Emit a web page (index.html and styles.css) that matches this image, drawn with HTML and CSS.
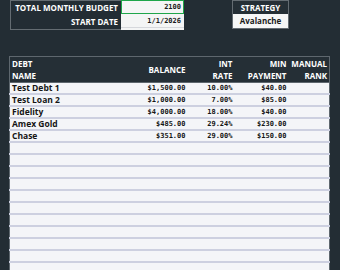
FILE: index.html
```html
<!DOCTYPE html>
<html>
<head>
<meta charset="utf-8">
<link rel="stylesheet" href="styles.css">
</head>
<body>
<div class="top">
  <div class="budget">
    <div class="labels">
      <div class="lbl">TOTAL MONTHLY BUDGET</div>
      <div class="lbl">START DATE</div>
    </div>
    <div class="vals">
      <div class="val sel">2100</div>
      <div class="val">1/1/2026</div>
    </div>
  </div>
  <div class="strategy">
    <div class="shead">STRATEGY</div>
    <div class="sval">Avalanche</div>
  </div>
</div>
<table class="debts">
  <colgroup>
    <col class="c-name"><col class="c-bal"><col class="c-rate"><col class="c-pay"><col class="c-rank">
  </colgroup>
  <thead>
    <tr>
      <th class="left">DEBT<br>NAME</th>
      <th>BALANCE</th>
      <th>INT<br>RATE</th>
      <th>MIN<br>PAYMENT</th>
      <th>MANUAL<br>RANK</th>
    </tr>
  </thead>
  <tbody>
    <tr><td class="name">Test Debt 1</td><td class="num">$1,500.00</td><td class="num">10.00%</td><td class="num">$40.00</td><td></td></tr>
    <tr><td class="name">Test Loan 2</td><td class="num">$1,000.00</td><td class="num">7.00%</td><td class="num">$85.00</td><td></td></tr>
    <tr><td class="name">Fidelity</td><td class="num">$4,000.00</td><td class="num">18.00%</td><td class="num">$40.00</td><td></td></tr>
    <tr><td class="name">Amex Gold</td><td class="num">$485.00</td><td class="num">29.24%</td><td class="num">$230.00</td><td></td></tr>
    <tr><td class="name">Chase</td><td class="num">$351.00</td><td class="num">29.00%</td><td class="num">$150.00</td><td></td></tr>
    <tr class="empty"><td></td><td></td><td></td><td></td><td></td></tr>
    <tr class="empty"><td></td><td></td><td></td><td></td><td></td></tr>
    <tr class="empty"><td></td><td></td><td></td><td></td><td></td></tr>
    <tr class="empty"><td></td><td></td><td></td><td></td><td></td></tr>
    <tr class="empty"><td></td><td></td><td></td><td></td><td></td></tr>
    <tr class="empty"><td></td><td></td><td></td><td></td><td></td></tr>
    <tr class="empty"><td></td><td></td><td></td><td></td><td></td></tr>
    <tr class="empty"><td></td><td></td><td></td><td></td><td></td></tr>
    <tr class="empty"><td></td><td></td><td></td><td></td><td></td></tr>
    <tr class="empty"><td></td><td></td><td></td><td></td><td></td></tr>
    <tr class="empty"><td></td><td></td><td></td><td></td><td></td></tr>
    <tr class="empty"><td></td><td></td><td></td><td></td><td></td></tr>
  </tbody>
</table>
</body>
</html>
```

FILE: styles.css
```css
html, body {
  margin: 0;
  padding: 0;
  background: #232d34;
  overflow: hidden;
  height: 270px;
}
body {
  font-family: "Open Sans", "DejaVu Sans", sans-serif;
}
.top {
  display: flex;
  align-items: flex-start;
  padding-left: 10px;
  height: 29px;
}
.budget {
  display: flex;
}
.labels {
  width: 110px;
  border: 1px solid #646c72;
  border-right: none;
}
.lbl {
  height: 14px;
  line-height: 14px;
  font-size: 8px;
  font-weight: 700;
  color: #ffffff;
  text-align: right;
  padding-right: 3px;
}
.vals {
  width: 63px;
  background: #f4f5f5;
}
.val {
  height: 14px;
  line-height: 14px;
  box-sizing: border-box;
  font-family: "DejaVu Sans Mono", monospace;
  font-weight: 700;
  font-size: 7px;
  color: #1a1a1a;
  text-align: right;
  padding-right: 3px;
  border-bottom: 1px solid #d6d8dc;
}
.val.sel {
  border: 1px solid #1fa64a;
  border-bottom: 1px solid #1fa64a;
  padding-right: 2px;
  line-height: 12px;
}
.strategy {
  margin-left: 48px;
  width: 55px;
  border: 1px solid #646c72;
}
.shead {
  height: 13px;
  line-height: 13px;
  background: #252f36;
  color: #ffffff;
  font-size: 8px;
  font-weight: 700;
  text-align: center;
}
.sval {
  height: 14px;
  line-height: 14px;
  background: #f6f7f7;
  color: #1a1a1a;
  font-size: 8px;
  font-weight: 700;
  text-align: center;
}
.debts {
  margin-top: 27px;
  margin-left: 9px;
  width: 321px;
  border-collapse: collapse;
  table-layout: fixed;
  border: 1px solid #5e676e;
}
.c-name { width: 120px; }
.c-bal { width: 58px; }
.c-rate { width: 47px; }
.c-pay { width: 54px; }
.c-rank { width: 41px; }
.debts th {
  background: #252f36;
  color: #ffffff;
  font-size: 8px;
  font-weight: 700;
  line-height: 12px;
  height: 25px;
  padding: 0 2px 0 0;
  text-align: right;
  vertical-align: middle;
  border-bottom: 1px solid #5e676e;
}
.debts th.left {
  text-align: left;
  padding-left: 2px;
}
.debts td {
  background: #f4f5f8;
  height: 10px;
  padding: 0 2px 0 0;
  border-bottom: 2px solid #cdd0e0;
  line-height: 10px;
  color: #151515;
  white-space: nowrap;
  overflow: hidden;
}
.debts td.name {
  font-size: 8.5px;
  font-weight: 700;
  padding-left: 2px;
}
.debts td.num {
  font-family: "DejaVu Sans Mono", monospace;
  font-size: 7px;
  font-weight: 700;
  text-align: right;
}
```
